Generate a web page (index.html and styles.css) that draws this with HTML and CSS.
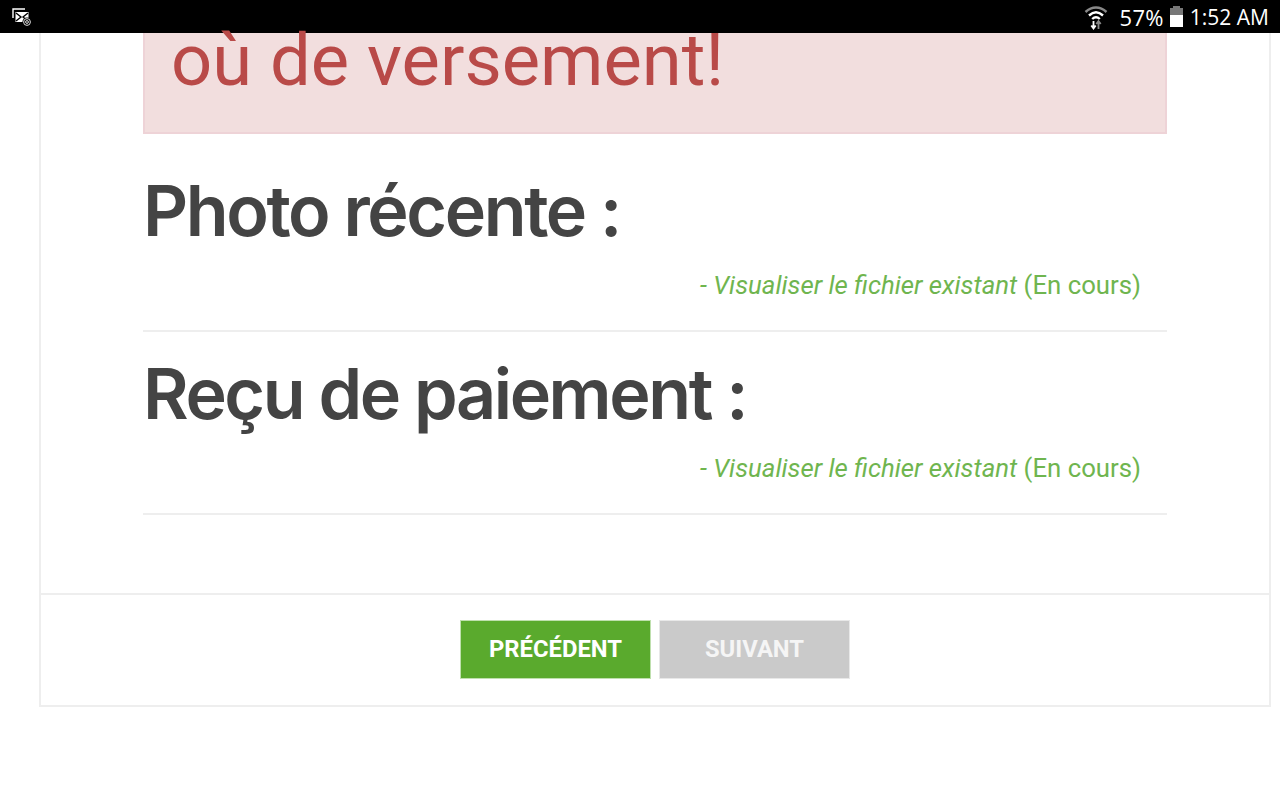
FILE: index.html
```html
<!DOCTYPE html>
<html lang="fr">
<head>
<meta charset="utf-8">
<title>Documents</title>
<link rel="stylesheet" href="styles.css">
</head>
<body>
<header class="statusbar">
  <svg class="notif" width="22" height="20" viewBox="0 0 22 20" fill="none">
    <path d="M2 11V2h12" stroke="#fff" stroke-width="1.4"/>
    <rect x="4.5" y="5" width="13" height="10" fill="#fff"/>
    <path d="M5 6l5 4-5 4M17 6l-5 4 5 4" stroke="#000" stroke-width="1.4"/>
    <circle cx="16" cy="15" r="4.6" fill="#000"/>
    <circle cx="16" cy="15" r="3.4" stroke="#ddd" stroke-width="1"/>
    <circle cx="16" cy="15" r="1.4" stroke="#ddd" stroke-width="1"/>
  </svg>
  <div class="status-right">
    <svg class="wifi" width="24" height="26" viewBox="0 0 24 26" fill="none" stroke-linecap="butt">
      <path d="M1.5 8C8 2 16 2 22.500 8" stroke="#888" stroke-width="2.4"/>
      <path d="M5 11.500C9.500 7.400 14.500 7.400 19 11.500" stroke="#fff" stroke-width="2.400"/>
      <path d="M8.200 15C10.500 12.800 13.500 12.800 15.800 15" stroke="#fff" stroke-width="2.400"/>
      <path d="M9.500 17v7M7.300 21.500l2.200 3 2.200-3" stroke="#fff" stroke-width="1.800"/>
      <path d="M14.500 25v-8M12.300 20l2.200-3 2.200 3" stroke="#888" stroke-width="1.800"/>
    </svg>
    <span class="pct">57%</span>
    <span class="battery">
      <span class="battery-cap"></span>
      <span class="battery-body"><span class="battery-fill"></span></span>
    </span>
    <span class="clock">1:52 AM</span>
  </div>
</header>
<main class="card">
  <section class="card-body">
    <div class="alert">où de versement!</div>
    <div class="field field-first">
      <h2 class="field-title">Photo récente :</h2>
      <p class="field-link"><em>- Visualiser le fichier existant</em> (En cours)</p>
    </div>
    <div class="field">
      <h2 class="field-title">Reçu de paiement :</h2>
      <p class="field-link"><em>- Visualiser le fichier existant</em> (En cours)</p>
    </div>
  </section>
  <footer class="card-footer">
    <button class="btn btn-green" type="button">PRÉCÉDENT</button>
    <button class="btn btn-grey" type="button">SUIVANT</button>
  </footer>
</main>
</body>
</html>
```
FILE: styles.css
```css
html, body { margin: 0; padding: 0; height: 800px; overflow: hidden; background: #fff; }
body { font-family: Roboto, sans-serif; }
.statusbar {
  height: 33px; background: #000; display: flex; align-items: center;
  justify-content: space-between; padding: 0 11px; box-sizing: border-box;
}
.notif { display: block; margin-top: 1px; }
.status-right { display: flex; align-items: center; color: #fff; font-family: "Open Sans", sans-serif; font-size: 22px; }
.wifi { display: block; margin-right: 12px; }
.pct { letter-spacing: 0.3px; }
.battery { width: 13px; display: flex; flex-direction: column; align-items: center; margin: 0 7px 0 6px; }
.battery-cap { display: block; width: 7px; height: 2px; background: #777; }
.battery-body { display: flex; align-items: flex-end; width: 13px; height: 19px; background: #777; }
.battery-fill { display: block; width: 100%; height: 12px; background: #fff; }
.clock { font-size: 21px; letter-spacing: 0; }
.card {
  margin: 0 9px 0 39px; border: 2px solid #eee; border-top: 0;
  box-sizing: border-box; height: 674px; display: flex; flex-direction: column;
}
.card-body { flex: 1; padding: 0 102px; }
.alert {
  height: 101px; box-sizing: border-box; background: #f2dede; border: 2px solid #eed3d7; border-top: 0;
  color: #b94a48; font-size: 72.3px; line-height: 56px; padding-left: 26px; white-space: nowrap;
}
.field { border-bottom: 2px solid #eee; height: 183px; box-sizing: border-box; }
.field-first { margin-top: 15px; }
.field-title {
  margin: 0; padding-top: 20px; font-family: Inter, sans-serif; font-weight: 600;
  font-size: 70px; line-height: 84px; letter-spacing: -2.4px; color: #444; white-space: nowrap;
}
.field-link {
  margin: 17px 0 0; padding-right: 26px; text-align: right; font-size: 25.75px; line-height: 30px; color: #6fb54f;
}
.card-footer {
  height: 112px; box-sizing: border-box; border-top: 2px solid #eee;
  display: flex; justify-content: center; align-items: center; gap: 8px; padding-bottom: 1px;
}
.btn {
  width: 191px; height: 59px; border: 1px solid #e8e8e8; color: #fff; font-family: Roboto, sans-serif;
  font-weight: 700; font-size: 23.8px; padding: 0 0 2px;
}
.btn-green { background: #5aaa2d; border-color: #bfe0ae; }
.btn-grey { background: #cacaca; color: #f5f5f5; }
```
